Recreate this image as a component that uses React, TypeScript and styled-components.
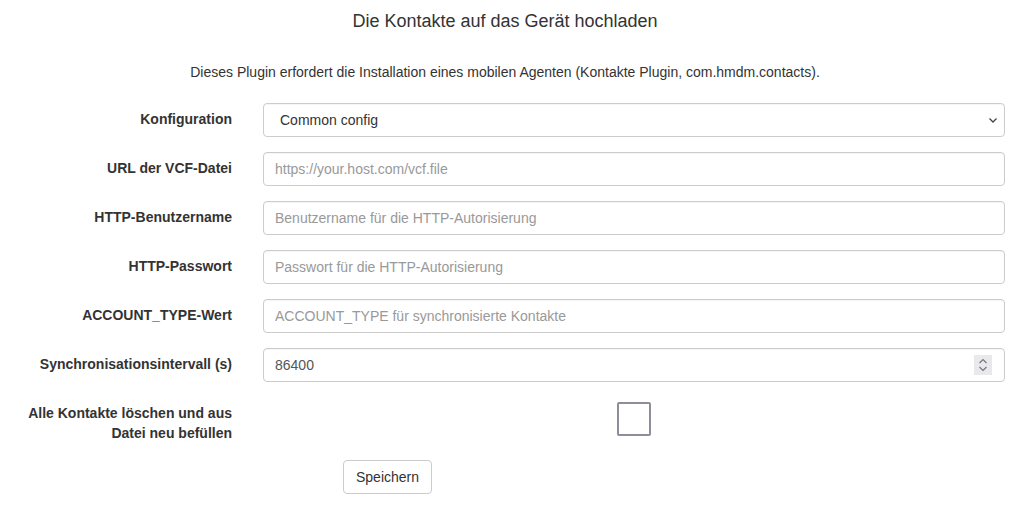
import React from 'react'
import styled, { createGlobalStyle } from 'styled-components'

const GlobalStyle = createGlobalStyle`
  html, body {
    margin: 0;
    padding: 0;
    background: #ffffff;
  }
  body {
    font-family: "Liberation Sans", Arial, Helvetica, sans-serif;
    font-size: 14px;
    line-height: 20px;
    color: #333333;
  }
  * {
    box-sizing: border-box;
  }
`

const Page = styled.div`
  width: 1026px;
  height: 512px;
  overflow: hidden;
`

const Header = styled.div`
  width: 1010px;
  text-align: center;
`

const Title = styled.h3`
  margin: 0;
  padding-top: 11px;
  font-size: 18px;
  line-height: 20px;
  font-weight: 400;
  color: #333;
`

const Description = styled.p`
  margin: 31px 0 0;
  font-size: 14px;
  line-height: 20px;
  color: #333;
`

const Form = styled.form`
  margin-top: 21px;
  padding-right: 21px;
  display: flex;
  flex-direction: column;
  gap: 15px;
`

const Row = styled.div<{ top?: number }>`
  display: grid;
  grid-template-columns: 232px 1fr;
  column-gap: 31px;
  align-items: center;
  margin-top: ${({ top }) => (top ? `${top}px` : '0')};
`

const Label = styled.label<{ multi?: boolean }>`
  padding-left: 15px;
  text-align: right;
  font-weight: 700;
  font-size: 14px;
  line-height: 20px;
  color: #333;
  align-self: ${({ multi }) => (multi ? 'start' : 'center')};
  margin: ${({ multi }) => (multi ? '1px 0 0' : '0 0 2px')};
`

const Box = styled.div`
  display: flex;
  align-items: center;
  height: 34px;
  border: 1px solid #cccccc;
  border-radius: 4px;
  background: #fff;
  box-shadow: inset 0 1px 1px rgba(0, 0, 0, 0.04);
`

const TextInput = styled.input`
  flex: 1;
  min-width: 0;
  height: 32px;
  border: none;
  outline: none;
  background: transparent;
  padding: 6px 12px 6px 11px;
  font-family: inherit;
  font-size: 14px;
  color: #555;
  appearance: textfield;

  &::placeholder {
    color: #999;
  }
  &::-webkit-inner-spin-button,
  &::-webkit-outer-spin-button {
    -webkit-appearance: none;
    margin: 0;
  }
`

const Select = styled.select`
  flex: 1;
  height: 32px;
  border: none;
  outline: none;
  background: transparent;
  appearance: none;
  padding: 0 0 0 16px;
  font-family: inherit;
  font-size: 14px;
  color: #333;
`

const Chevron = styled.svg`
  width: 10px;
  height: 10px;
  margin-right: 6px;
  flex: none;
`

const Spinner = styled.div`
  width: 18px;
  height: 20px;
  margin-right: 12px;
  background: #e9e9ed;
  display: flex;
  flex-direction: column;
  align-items: center;
  justify-content: center;
  gap: 2px;
  flex: none;
`

const CheckCell = styled.div`
  display: flex;
  justify-content: center;
  align-self: start;
`

const CheckBox = styled.input`
  appearance: none;
  width: 34px;
  height: 34px;
  margin: 0;
  border: 2px solid #8f8d99;
  border-radius: 2px;
  background: #fff;
`

const Button = styled.button`
  margin-left: 80px;
  justify-self: start;
  height: 34px;
  padding: 6px 12px;
  border: 1px solid #cccccc;
  border-radius: 4px;
  background: #fff;
  font-family: inherit;
  font-size: 14px;
  line-height: 20px;
  color: #333;
`

const fields = [
  { label: 'URL der VCF-Datei', placeholder: 'https://your.host.com/vcf.file' },
  { label: 'HTTP-Benutzername', placeholder: 'Benutzername für die HTTP-Autorisierung' },
  { label: 'HTTP-Passwort', placeholder: 'Passwort für die HTTP-Autorisierung' },
  { label: 'ACCOUNT_TYPE-Wert', placeholder: 'ACCOUNT_TYPE für synchronisierte Kontakte' },
]

export default function App() {
  return (
    <Page>
      <GlobalStyle />
      <Header>
        <Title>Die Kontakte auf das Gerät hochladen</Title>
        <Description>
          Dieses Plugin erfordert die Installation eines mobilen Agenten (Kontakte Plugin, com.hmdm.contacts).
        </Description>
      </Header>
      <Form onSubmit={(e) => e.preventDefault()}>
        <Row>
          <Label>Konfiguration</Label>
          <Box>
            <Select defaultValue="common">
              <option value="common">Common config</option>
            </Select>
            <Chevron viewBox="0 0 10 10">
              <path d="M1.5 3.5 L5 7 L8.5 3.5" fill="none" stroke="#444" strokeWidth="1.3" />
            </Chevron>
          </Box>
        </Row>
        {fields.map((f) => (
          <Row key={f.label}>
            <Label>{f.label}</Label>
            <Box>
              <TextInput type="text" placeholder={f.placeholder} />
            </Box>
          </Row>
        ))}
        <Row>
          <Label>Synchronisationsintervall (s)</Label>
          <Box>
            <TextInput type="number" defaultValue={86400} />
            <Spinner>
              <svg width="10" height="6" viewBox="0 0 10 6">
                <path d="M1.5 5 L5 1.5 L8.5 5" fill="none" stroke="#777" strokeWidth="1.2" />
              </svg>
              <svg width="10" height="6" viewBox="0 0 10 6">
                <path d="M1.5 1 L5 4.5 L8.5 1" fill="none" stroke="#777" strokeWidth="1.2" />
              </svg>
            </Spinner>
          </Box>
        </Row>
        <Row top={5}>
          <Label multi>Alle Kontakte löschen und aus Datei neu befüllen</Label>
          <CheckCell>
            <CheckBox type="checkbox" />
          </CheckCell>
        </Row>
        <Row top={2}>
          <span />
          <Button type="submit">Speichern</Button>
        </Row>
      </Form>
    </Page>
  )
}
